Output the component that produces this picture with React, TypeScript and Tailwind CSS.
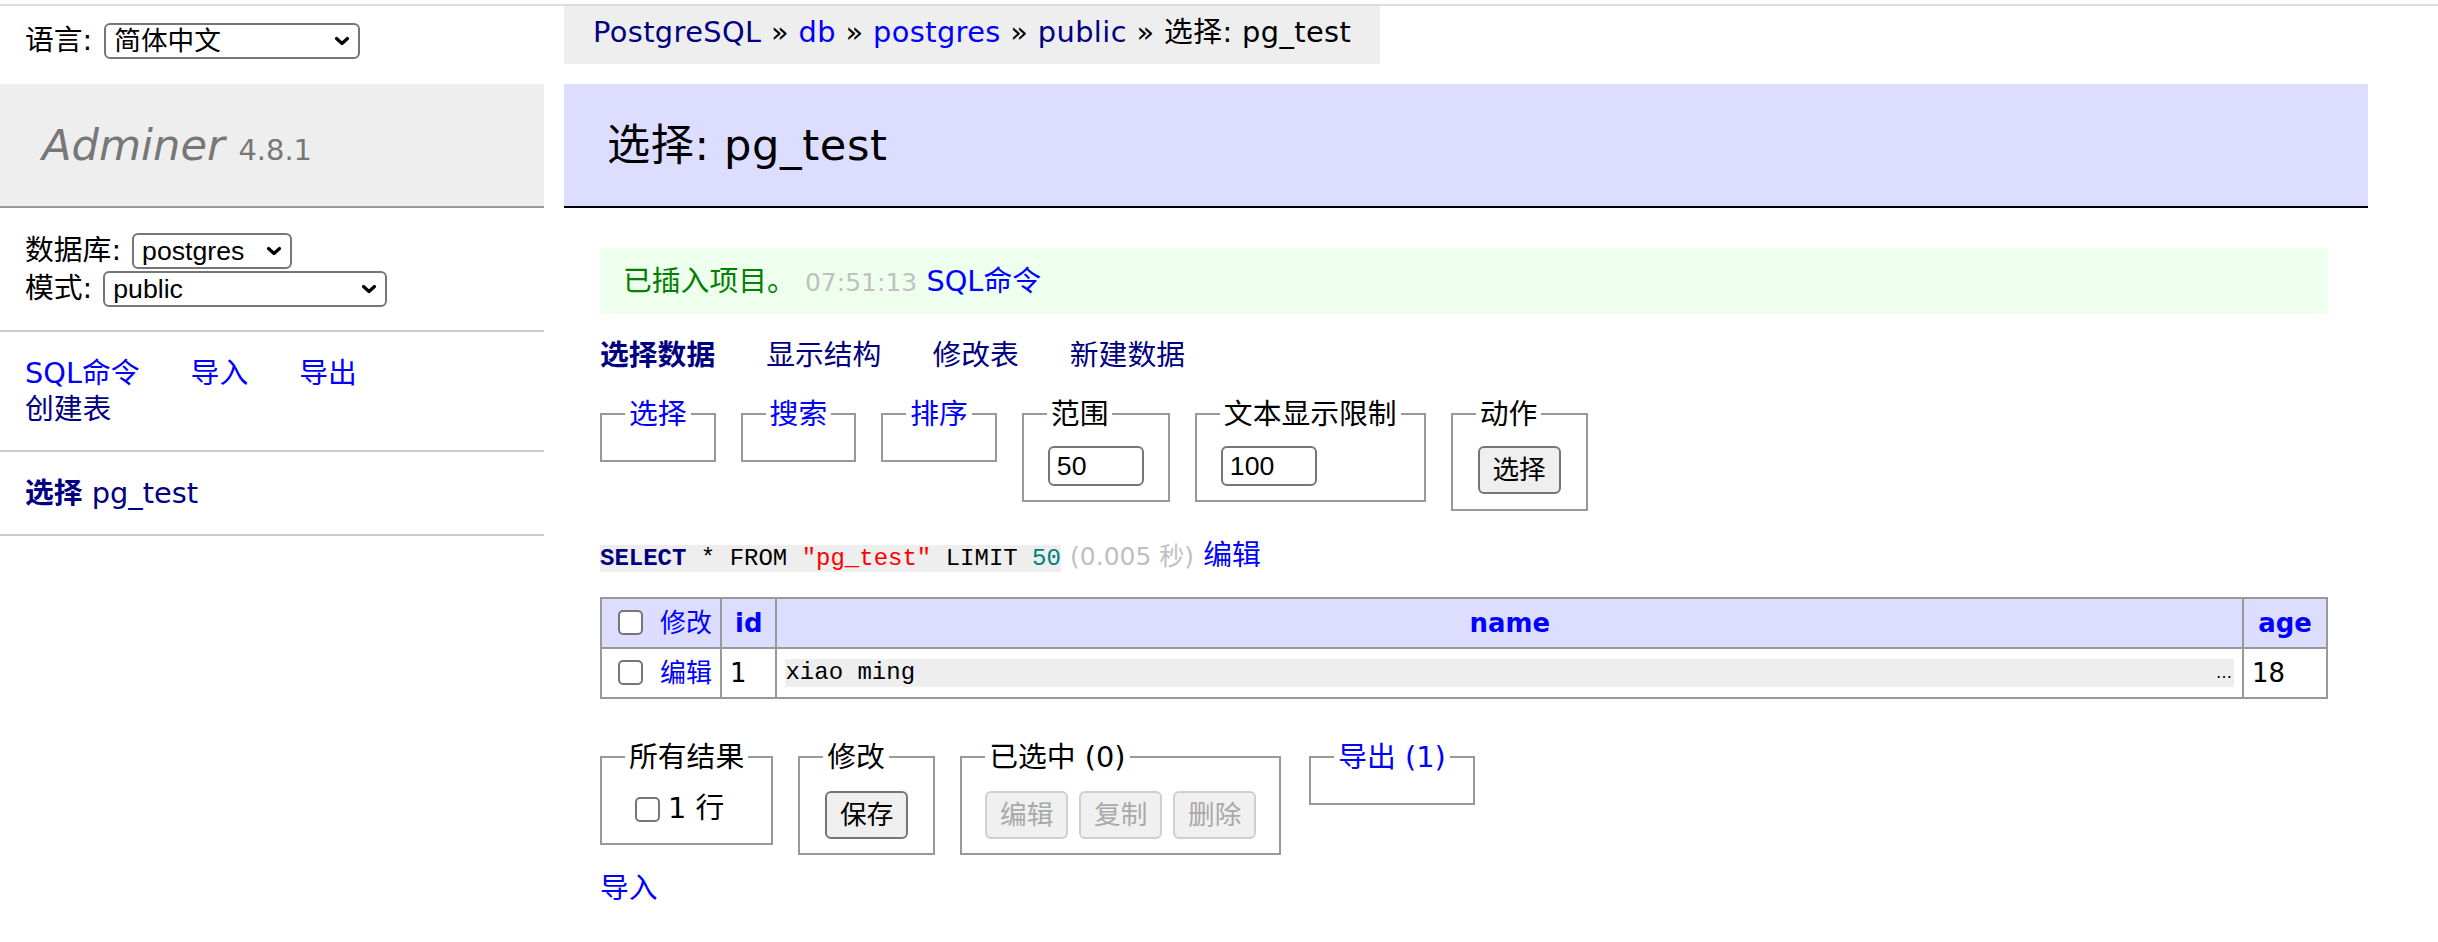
import type { ReactNode } from "react"
import clsx from "clsx"

function Chevron() {
  return (
    <svg width="16" height="10" viewBox="0 0 16 10" className="shrink-0">
      <path
        d="M2.5 2.5 L8 7.5 L13.5 2.5"
        stroke="#000"
        strokeWidth="3.2"
        fill="none"
        strokeLinecap="round"
        strokeLinejoin="round"
      />
    </svg>
  )
}

function Select({ label, className }: { label: string; className: string }) {
  return (
    <div
      className={clsx(
        "flex h-[36px] items-center justify-between rounded-[6px] border-2 border-[#767676] bg-white pl-[8px] pr-[8px] font-['Liberation_Sans','Noto_Sans_CJK_SC',sans-serif] text-[26.67px] leading-none",
        className,
      )}
    >
      <span>{label}</span>
      <Chevron />
    </div>
  )
}

function Checkbox({ className }: { className?: string }) {
  return (
    <span
      className={clsx(
        "inline-block h-[25px] w-[25px] shrink-0 rounded-[5px] border-2 border-[#767676] bg-white",
        className,
      )}
    />
  )
}

function Button({ children, disabled }: { children: ReactNode; disabled?: boolean }) {
  return (
    <button
      type="button"
      className={clsx(
        "h-[48px] w-[83px] rounded-[6px] border-2 font-['Liberation_Sans','Noto_Sans_CJK_SC',sans-serif] text-[26.67px] leading-none",
        disabled
          ? "border-[#cfcfcf] bg-[#f0f0f0] text-[#a9a9a9]"
          : "border-[#767676] bg-[#efefef] text-black",
      )}
    >
      {children}
    </button>
  )
}

function Box({
  legend,
  legendClass,
  children,
  className,
}: {
  legend: ReactNode
  legendClass?: string
  children?: ReactNode
  className?: string
}) {
  return (
    <fieldset className={clsx("min-w-0 border-2 border-[#999] px-[23px] pb-[14px] pt-[14px]", className)}>
      <legend className={clsx("px-[4px] leading-[36px]", legendClass)}>{legend}</legend>
      {children}
    </fieldset>
  )
}

function NumInput({ value }: { value: string }) {
  return (
    <input
      readOnly
      value={value}
      className="mx-[1px] h-[40px] w-[96px] rounded-[6px] border-2 border-[#767676] bg-white px-[7px] font-['Liberation_Sans',sans-serif] text-[26.67px] text-black outline-none"
    />
  )
}

function Sidebar() {
  return (
    <aside className="w-[544px] shrink-0">
      <div className="h-[78px] pl-[25px] pt-[17px]">
        <div className="flex h-[36px] items-center gap-[12px]">
          <span>语言:</span>
          <Select label="简体中文" className="w-[256px]" />
        </div>
      </div>

      <h1 className="h-[124px] border-b-2 border-[#999] bg-[#eee] px-[42px] py-[34px] text-[43.2px] leading-[54px] text-[#777]">
        <span className="italic">Adminer</span> <span className="text-[28.9px]">4.8.1</span>
      </h1>

      <div className="border-b-2 border-[#ccc] px-[25px] pb-[23px] pt-[25px]">
        <div className="flex h-[36px] items-center gap-[11px]">
          <span>数据库:</span>
          <Select label="postgres" className="w-[160px]" />
        </div>
        <div className="mt-[2px] flex h-[36px] items-center gap-[11px]">
          <span>模式:</span>
          <Select label="public" className="w-[284px]" />
        </div>
      </div>

      <div className="border-b-2 border-[#ccc] px-[25px] py-[23px] leading-[36px]">
        <div className="flex gap-[51px] text-[#0000ff]">
          <a>SQL命令</a>
          <a>导入</a>
          <a>导出</a>
        </div>
        <div>
          <a className="text-[#000080]">创建表</a>
        </div>
      </div>

      <div className="border-b-2 border-[#ccc] px-[25px] py-[23px] leading-[36px] text-[#000080]">
        <a className="font-bold">选择</a> <a>pg_test</a>
      </div>
    </aside>
  )
}

function Main() {
  return (
    <main className="ml-[20px] w-[1804px]">
      <div className="flex">
        <div className="h-[58px] whitespace-nowrap bg-[#eee] px-[29px] leading-[52px] tracking-[0.4px]">
          <a className="text-[#000080]">PostgreSQL</a> » <a className="text-[#0000ff]">db</a> »{" "}
          <a className="text-[#0000ff]">postgres</a> » <a className="text-[#000080]">public</a> » 选择: pg_test
        </div>
      </div>

      <h2 className="mt-[20px] h-[124px] border-b-2 border-black bg-[#ddf] px-[43px] py-[34px] text-[43.2px] leading-[54px] tracking-[0.6px]">
        选择: pg_test
      </h2>

      <div className="pl-[36px] pr-[40px]">
        <div className="mt-[40px] h-[66px] whitespace-nowrap bg-[#efe] px-[23px] leading-[66px]">
          <span className="text-[#008000]">已插入项目。</span>{" "}
          <span className="text-[25px] text-[#c0c0c0]">07:51:13</span> <a className="text-[#0000ff]">SQL命令</a>
        </div>

        <div className="mt-[23px] flex h-[36px] gap-[51px] leading-[36px] text-[#000080]">
          <a className="font-bold">选择数据</a>
          <a>显示结构</a>
          <a>修改表</a>
          <a>新建数据</a>
        </div>

        <div className="mt-[23px] flex items-start gap-[25px]">
          <Box legend="选择" legendClass="text-[#0000ff]" />
          <Box legend="搜索" legendClass="text-[#0000ff]" />
          <Box legend="排序" legendClass="text-[#0000ff]" />
          <Box legend="范围">
            <NumInput value="50" />
          </Box>
          <Box legend="文本显示限制">
            <NumInput value="100" />
          </Box>
          <Box legend="动作">
            <div className="mx-[2px] h-[49px]">
              <Button>选择</Button>
            </div>
          </Box>
        </div>

        <p className="mt-[26px] whitespace-nowrap leading-[36px]">
          <code className="bg-[#eee] font-['Liberation_Mono',monospace] text-[24px]">
            <b className="text-[#000080]">SELECT</b> * FROM <span className="text-[#ff0000]">"pg_test"</span> LIMIT{" "}
            <span className="text-[#008080]">50</span>
          </code>{" "}
          <span className="text-[25px] text-[#c0c0c0]">(0.005 秒)</span> <a className="text-[#0000ff]">编辑</a>
        </p>

        <table className="mt-[20px] w-full border-collapse border-2 border-[#999] text-[25.92px] leading-[1.25]">
          <thead>
            <tr className="h-[50px] bg-[#ddf]">
              <td className="w-[120px] border-2 border-[#999] px-[8px]">
                <div className="flex items-center gap-[17px]">
                  <Checkbox className="ml-[8px]" />
                  <a className="text-[#0000ff]">修改</a>
                </div>
              </td>
              <th className="w-[55px] border-2 border-[#999] px-[13px] text-left font-bold text-[#0000ff]">id</th>
              <th className="border-2 border-[#999] px-[13px] text-center font-bold text-[#0000ff]">name</th>
              <th className="w-[84px] border-2 border-[#999] px-[8px] text-center font-bold text-[#0000ff]">age</th>
            </tr>
          </thead>
          <tbody>
            <tr className="h-[50px]">
              <td className="border-2 border-[#999] px-[8px]">
                <div className="flex items-center gap-[17px]">
                  <Checkbox className="ml-[8px]" />
                  <a className="text-[#0000ff]">编辑</a>
                </div>
              </td>
              <td className="border-2 border-[#999] px-[8px]">1</td>
              <td className="border-2 border-[#999] px-[8px]">
                <div className="flex h-[28px] items-center justify-between bg-[#eee] pr-[2px]">
                  <span className="font-['Liberation_Mono',monospace] text-[24px]">xiao ming</span>
                  <span className="text-[16px]">…</span>
                </div>
              </td>
              <td className="border-2 border-[#999] px-[8px]">18</td>
            </tr>
          </tbody>
        </table>

        <div className="mt-[40px] flex items-start gap-[25px]">
          <Box legend="所有结果">
            <div className="flex h-[40px] items-center pl-[10px]">
              <Checkbox />
              <span className="ml-[8px]">1 行</span>
            </div>
          </Box>
          <Box legend="修改">
            <div className="mx-[2px] pt-[2px]">
              <Button>保存</Button>
            </div>
          </Box>
          <Box legend="已选中 (0)">
            <div className="flex gap-[11px] pt-[2px]">
              <Button disabled>编辑</Button>
              <Button disabled>复制</Button>
              <Button disabled>删除</Button>
            </div>
          </Box>
          <Box legend="导出 (1)" legendClass="text-[#0000ff]" className="ml-[3px]" />
        </div>

        <p className="mt-[15px] leading-[36px]">
          <a className="text-[#0000ff]">导入</a>
        </p>
      </div>
    </main>
  )
}

export default function App() {
  return (
    <div className="min-h-screen bg-white font-['DejaVu_Sans','Noto_Sans_CJK_SC',sans-serif] text-[28.8px] leading-[1.25] text-black">
      <div className="pt-[4px]">
        <div className="h-[2px] bg-[#dcdcdc]" />
      </div>
      <div className="flex">
        <Sidebar />
        <Main />
      </div>
    </div>
  )
}
